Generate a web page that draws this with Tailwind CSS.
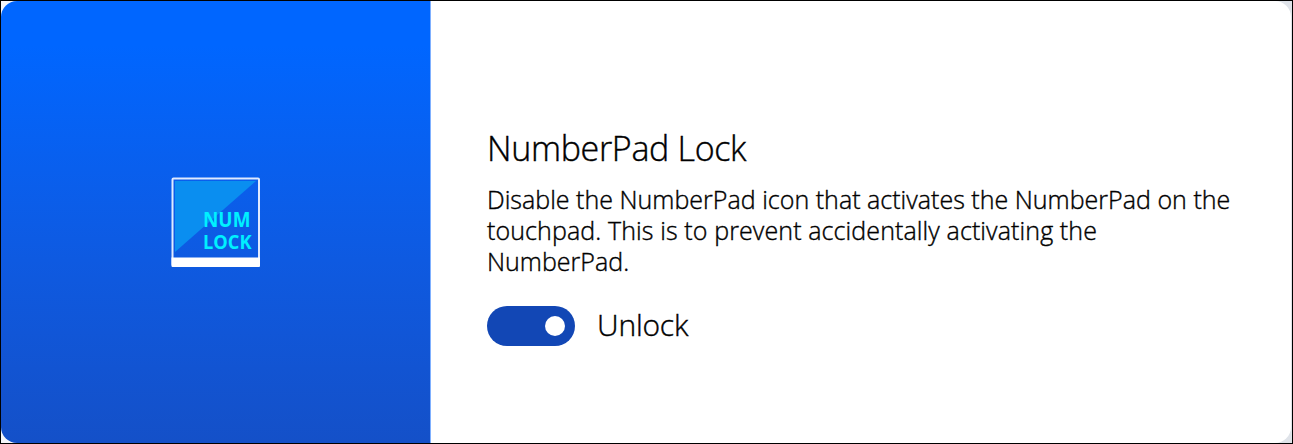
<!DOCTYPE html>
<html lang="en">
<head>
  <meta charset="UTF-8" />
  <title>NumberPad Lock</title>
  <meta name="viewport" content="width=device-width, initial-scale=1.0" />

  <!-- Tailwind CSS -->
  <script src="https://cdn.jsdelivr.net/npm/@tailwindcss/browser@4"></script>
</head>
<body class="h-[444px] w-[1293px] overflow-hidden border border-black bg-linear-to-r from-[#f5f6fa] to-[#dfe3e9] font-['Open_Sans','Noto_Sans',sans-serif] text-black">

  <!-- Card -->
  <main class="flex h-[442px] w-[1290px] overflow-hidden rounded-[16px] bg-white">

    <!-- Banner -->
    <div class="flex w-[430px] shrink-0 items-center justify-center border-r border-[#7fb0ff] bg-linear-to-b from-[#0066ff] from-10% to-[#1450c8]">
      <svg class="h-[91px] w-[90px]" viewBox="0 0 90 91" fill="none">
        <path d="M4 4H85L4 75Z" fill="#0a8ef0"></path>
        <rect x="1.500" y="1.500" width="86.500" height="87" rx="1" stroke="#e0eaff" stroke-width="2"></rect>
        <path d="M0.500 80.500H89V89a1 1 0 0 1-1 1H1.500a1 1 0 0 1-1-1Z" fill="#fff"></path>
        <text x="32" y="49.500" textLength="47.500" lengthAdjust="spacingAndGlyphs" font-size="20.500" font-weight="700" fill="#00f0ff">NUM</text>
        <text x="32" y="71.500" textLength="48.500" lengthAdjust="spacingAndGlyphs" font-size="20" font-weight="700" fill="#00f0ff">LOCK</text>
      </svg>
    </div>

    <!-- Content -->
    <section class="flex flex-1 flex-col pl-[56px] pt-[124px] font-light [-webkit-text-stroke:0.4px_black]">
      <h1 class="text-[34px] leading-[46px] tracking-[-0.32px]">NumberPad Lock</h1>
      <p class="mt-[13px] text-[25px] leading-[31px] tracking-[0.02px] whitespace-nowrap">
        Disable the NumberPad icon that activates the NumberPad on the<br />
        <span class="tracking-[0.11px]">touchpad. This is to prevent accidentally activating the</span><br />
        NumberPad.
      </p>
      <div class="mt-[29px] flex h-10 items-center gap-[22px]">
        <button type="button" role="switch" aria-checked="true" aria-label="NumberPad lock" class="flex h-10 w-[88px] items-center justify-end rounded-full bg-[#1247b5] pr-[10px]">
          <span class="size-5 rounded-full bg-white"></span>
        </button>
        <span class="pb-[3px] text-[30px] leading-[37px] tracking-[-0.2px]">Unlock</span>
      </div>
    </section>
  </main>
</body>
</html>
